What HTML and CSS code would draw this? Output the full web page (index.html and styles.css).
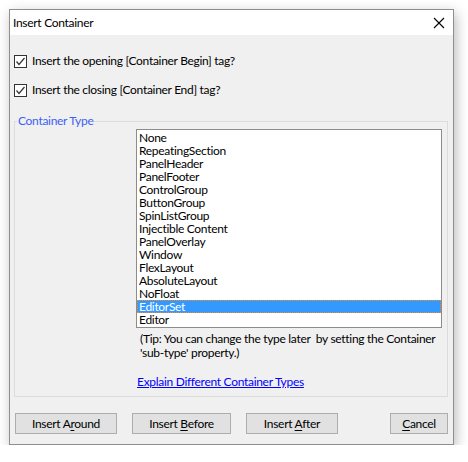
FILE: index.html
```html
<!DOCTYPE html>
<html>
<head>
<meta charset="utf-8">
<link rel="stylesheet" href="styles.css">
</head>
<body>
<div class="window">
  <div class="titlebar">
    <span class="title">Insert Container</span>
    <svg class="close" width="12" height="12" viewBox="0 0 12 12"><path d="M1 1 L11 11 M11 1 L1 11" stroke="#000" stroke-width="1.1" fill="none"/></svg>
  </div>
  <div class="content">
    <label class="check-row"><span class="checkbox"><svg width="11" height="11" viewBox="0 0 11 11"><path d="M1.5 5.5 L4 8.5 L9.5 2" stroke="#333" stroke-width="1.2" fill="none"/></svg></span>Insert the opening [Container Begin] tag?</label>
    <label class="check-row second"><span class="checkbox"><svg width="11" height="11" viewBox="0 0 11 11"><path d="M1.5 5.5 L4 8.5 L9.5 2" stroke="#333" stroke-width="1.2" fill="none"/></svg></span>Insert the closing [Container End] tag?</label>
    <fieldset class="group">
      <legend>Container Type</legend>
      <div class="listbox">
        <div class="item">None</div>
        <div class="item">RepeatingSection</div>
        <div class="item">PanelHeader</div>
        <div class="item">PanelFooter</div>
        <div class="item">ControlGroup</div>
        <div class="item">ButtonGroup</div>
        <div class="item">SpinListGroup</div>
        <div class="item">Injectible Content</div>
        <div class="item">PanelOverlay</div>
        <div class="item">Window</div>
        <div class="item">FlexLayout</div>
        <div class="item">AbsoluteLayout</div>
        <div class="item">NoFloat</div>
        <div class="item selected">EditorSet</div>
        <div class="item">Editor</div>
      </div>
      <div class="tip">(Tip: You can change the type later&nbsp; by setting the Container<br>'sub-type' property.)</div>
      <a class="link" href="#">Explain Different Container Types</a>
    </fieldset>
    <div class="buttons">
      <button class="btn around">Insert A<u>r</u>ound</button>
      <button class="btn before">Insert <u>B</u>efore</button>
      <button class="btn after">Insert <u>A</u>fter</button>
      <button class="btn cancel"><u>C</u>ancel</button>
    </div>
  </div>
</div>
</body>
</html>
```

FILE: styles.css
```css
html, body {
  margin: 0;
  padding: 0;
  background: #ffffff;
}
body {
  font-family: "Lato", "Liberation Sans", sans-serif;
  font-size: 12px;
  letter-spacing: -0.3px;
  color: #000;
}
.window {
  margin: 9px 0 0 9px;
  width: 443px;
  height: 434px;
  border: 1px solid #8f8f8f;
  background: #f0f0f0;
  box-shadow: 2px 4px 12px rgba(0,0,0,0.28);
  display: flex;
  flex-direction: column;
}
.titlebar {
  height: 25px;
  background: #fff;
  display: flex;
  align-items: center;
  justify-content: space-between;
  padding: 0 8px 0 3px;
}
.title {
  line-height: 16px;
}
.close {
  display: block;
  margin-top: 1px;
}
.content {
  display: flex;
  flex-direction: column;
  padding: 18px 5px 0 4px;
}
.check-row {
  display: flex;
  align-items: center;
  height: 16px;
  line-height: 16px;
}
.check-row.second {
  margin-top: 13px;
}
.checkbox {
  width: 11px;
  height: 11px;
  border: 1px solid #333;
  background: #fff;
  margin-right: 5px;
  display: flex;
}
.group {
  margin: 15px 0 0 0;
  padding: 0 0 7px 0;
  border: 1px solid #dcdcdc;
  min-width: 0;
  display: flex;
  flex-direction: column;
}
.group legend {
  color: #3c60f4;
  padding: 0 1px;
  margin-left: 2px;
  line-height: 16px;
}
.listbox {
  margin-left: 121px;
  width: 304px;
  border: 1px solid #8c8c8c;
  background: #fff;
  padding: 1px 0 1px 0;
}
.item {
  height: 13px;
  line-height: 13px;
  padding-left: 2px;
  white-space: nowrap;
}
.item.selected {
  background: #3399ff;
  color: #fff;
  outline: 1px dotted #f08a24;
  outline-offset: -1px;
}
.tip {
  margin: 4px 0 0 125px;
  line-height: 14px;
  white-space: nowrap;
}
.link {
  margin: 15px 0 0 122px;
  color: #0000ff;
  line-height: 14px;
  align-self: flex-start;
}
.buttons {
  display: flex;
  margin-top: 16px;
  padding-left: 1px;
}
.btn {
  font: inherit;
  letter-spacing: inherit;
  color: #000;
  height: 21px;
  padding: 0;
  border: 1px solid #adadad;
  background: #e1e1e1;
  margin-right: 15px;
}
.btn u {
  text-decoration-thickness: 1px;
  text-underline-offset: 2px;
}
.around { width: 102px; }
.before { width: 99px; }
.after { width: 92px; }
.cancel { width: 58px; margin-left: auto; margin-right: 0; }
```
